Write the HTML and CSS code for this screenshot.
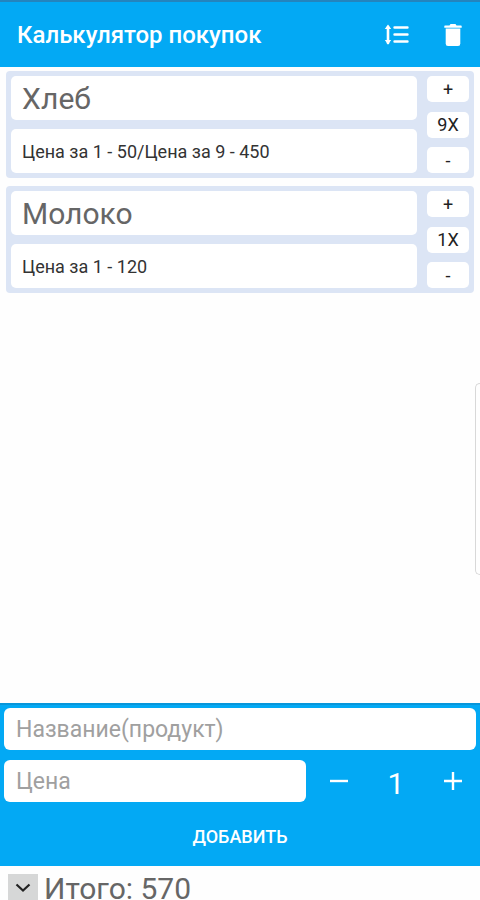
FILE: index.html
```html
<!DOCTYPE html>
<html lang="ru">
<head>
<meta charset="utf-8">
<meta name="viewport" content="width=device-width, initial-scale=1">
<title>Калькулятор покупок</title>
<link rel="stylesheet" href="styles.css">
</head>
<body>
<header class="bar">
  <h1 class="title">Калькулятор покупок</h1>
  <button class="icon-button" type="button" aria-label="Сортировка">
    <svg width="26" height="22" viewBox="0 0 26 22" fill="none" stroke="currentColor" stroke-linecap="round">
      <path d="M4 3v16" stroke-width="2.600"/>
      <path d="M4 .6 7.200 5H.8zM4 20.400.8 16h6.400z" fill="currentColor" stroke="none"/>
      <path d="M10.500 3.500H23.500M10.500 10.500H23.500M10.500 17.500H23.500" stroke-width="2.400"/>
    </svg>
  </button>
  <button class="icon-button" type="button" aria-label="Удалить всё">
    <svg width="18" height="24" viewBox="0 0 18 24" fill="currentColor">
      <path d="M1 2.500h4.500L6.500 1h5l1 1.500H17q.7 0 .7.800v1.500H.3V3.300q0-.8.700-.8z"/>
      <path d="M1.700 5.600h14.600V20.500q0 2.500-2.300 2.500H4q-2.300 0-2.300-2.500z"/>
    </svg>
  </button>
</header>

<main class="list">
  <article class="card">
    <div class="info">
      <h2 class="box name">Хлеб</h2>
      <p class="box price">Цена за 1 - 50/Цена за 9 - 450</p>
    </div>
    <div class="stepper">
      <button class="step" type="button">+</button>
      <output class="step">9X</output>
      <button class="step" type="button">-</button>
    </div>
  </article>
  <article class="card">
    <div class="info">
      <h2 class="box name">Молоко</h2>
      <p class="box price">Цена за 1 - 120</p>
    </div>
    <div class="stepper">
      <button class="step" type="button">+</button>
      <output class="step">1X</output>
      <button class="step" type="button">-</button>
    </div>
  </article>
  <div class="edge-handle"></div>
</main>

<form class="form">
  <input class="field" type="text" aria-label="Название продукта" placeholder="Название(продукт)">
  <div class="row">
    <input class="field" type="text" inputmode="decimal" aria-label="Цена" placeholder="Цена">
    <div class="quantity">
      <button class="icon-button" type="button" aria-label="Меньше">
        <svg width="18" height="18" viewBox="0 0 18 18" stroke="currentColor" stroke-width="2.400"><path d="M0 9h18"/></svg>
      </button>
      <output class="count">1</output>
      <button class="icon-button" type="button" aria-label="Больше">
        <svg width="18" height="18" viewBox="0 0 18 18" stroke="currentColor" stroke-width="2.400"><path d="M0 9h18M9 0v18"/></svg>
      </button>
    </div>
  </div>
  <button class="add" type="button">ДОБАВИТЬ</button>
</form>

<footer class="total">
  <button class="toggle" type="button" aria-label="Свернуть">
    <svg width="16" height="10" viewBox="0 0 16 10" fill="none" stroke="currentColor" stroke-width="2.200"><path d="M1.500 1.500 8 7.500l6.500-6"/></svg>
  </button>
  <span>Итого: 570</span>
</footer>
</body>
</html>
```
FILE: styles.css
```css
* {
  box-sizing: border-box;
}

body {
  margin: 0;
  height: 100vh;
  display: flex;
  flex-direction: column;
  overflow: hidden;
  background: #fefefe;
  color: #666;
  font-family: Roboto, "Liberation Sans", sans-serif;
}

button,
input {
  margin: 0;
  padding: 0;
  border: 0;
  font: inherit;
}

button {
  display: flex;
  align-items: center;
  justify-content: center;
  background: none;
  color: inherit;
}

svg {
  display: block;
}

.bar {
  flex: none;
  display: flex;
  align-items: center;
  gap: 30px;
  height: 67px;
  padding: 0 14px 0 17px;
  border-top: 2px solid #2484bd;
  background: #03a9f4;
  color: #fff;
}

.title {
  flex: 1;
  margin: 0;
  font-size: 24px;
  font-weight: 500;
  line-height: 32px;
}

.icon-button {
  min-width: 26px;
  height: 32px;
}

.list {
  position: relative;
  flex: 1;
  min-height: 0;
  display: flex;
  flex-direction: column;
  gap: 8px;
  padding: 4px 6px;
}

.card {
  display: flex;
  gap: 10px;
  padding: 5px;
  border-radius: 4px;
  background: #dce5f5;
}

.info {
  flex: 1;
  display: flex;
  flex-direction: column;
  gap: 9px;
}

.box {
  height: 44px;
  margin: 0;
  padding: 0 11px;
  border-radius: 5px;
  background: #fff;
  font-weight: 400;
  line-height: 46px;
}

.name {
  font-size: 30px;
}

.price {
  color: #333;
  font-size: 18px;
}

.stepper {
  display: flex;
  flex-direction: column;
  justify-content: space-between;
  width: 42px;
}

.step {
  display: flex;
  align-items: center;
  justify-content: center;
  height: 26px;
  border-radius: 5px;
  background: #fff;
  color: #222;
  font-size: 18px;
}

.edge-handle {
  position: absolute;
  top: 316px;
  right: 0;
  width: 5px;
  height: 192px;
  border: 1px solid #d8d8d8;
  border-right: 0;
  border-radius: 5px 0 0 5px;
}

.form {
  flex: none;
  display: flex;
  flex-direction: column;
  gap: 10px;
  padding: 3px 4px 6px;
  border-top: 2px solid #0796da;
  background: #03a9f4;
  color: #fff;
}

.field {
  width: 100%;
  height: 42px;
  padding: 0 12px;
  border-radius: 6px;
  background: #fff;
  color: #444;
  font-size: 23px;
}

.field::placeholder {
  color: #a0a0a0;
}

.row {
  display: grid;
  grid-template-columns: 16fr 9fr;
}

.quantity {
  display: flex;
  align-items: center;
  justify-content: space-between;
  padding: 0 10px 0 20px;
}

.count {
  font-size: 30px;
  line-height: 48px;
  height: 42px;
}

.add {
  height: 48px;
  font-size: 18px;
  font-weight: 500;
}

.total {
  flex: none;
  display: flex;
  align-items: flex-start;
  gap: 6px;
  height: 34px;
  padding: 8px 8px 0;
  font-size: 30px;
  line-height: 30px;
}

.toggle {
  width: 30px;
  height: 28px;
  background: #d6d7d7;
  color: #222;
}
```
